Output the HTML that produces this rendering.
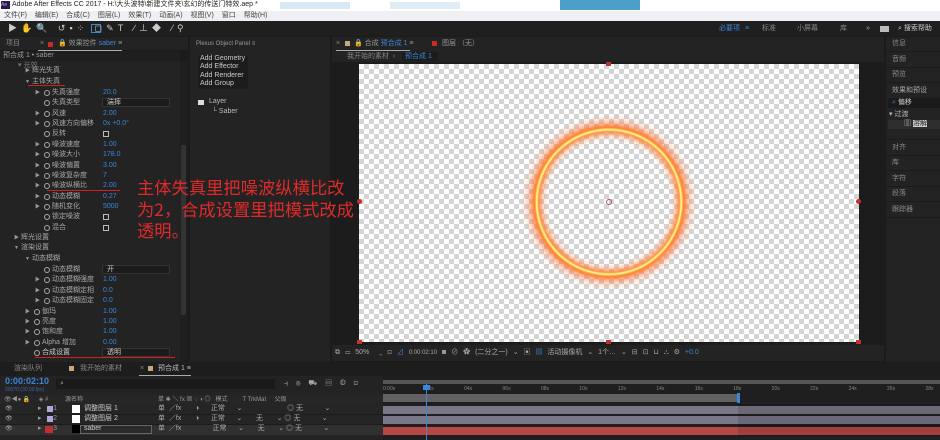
<!DOCTYPE html>
<html><head><meta charset="utf-8"><style>
*{margin:0;padding:0;box-sizing:border-box}
body{width:940px;height:440px;overflow:hidden;background:#1b1b1b;font-family:"Liberation Sans","Noto Sans CJK SC",sans-serif;position:relative;color:#a8a8a8}
div,span,b,i{position:absolute}
.r{left:0;width:180px;height:10px;font-size:7px;line-height:10px;white-space:nowrap}
.r span,.r b,.r i{top:0}
.r b{font-weight:normal;color:#3a86d8}
.a{font-style:normal;font-size:5px;color:#999}
.s{width:6px;height:6px;border:1px solid #aaa;border-radius:50%;top:2px!important}
.cb{width:6px;height:6px;border:1px solid #bbb;top:2px!important}
.dd{height:9px;background:#1c1c1c;border:1px solid #333;top:0!important;color:#ccc;padding-left:4px;line-height:8px}
.t{font-size:7px;line-height:10px;white-space:nowrap}
.rp{left:892px;font-size:7px;color:#8a8a8a}
.rl{left:886px;width:54px;height:1px;background:#1b1b1b}
</style></head><body>
<!-- title + menu -->
<div style="left:0;top:0;width:940px;height:11px;background:#fff"></div>
<div class="t" style="left:12px;top:0;color:#222;line-height:10px">Adobe After Effects CC 2017 - H:\大头波特\新建文件夹\玄幻的传送门特效.aep *</div>
<div style="left:1px;top:1px;width:9px;height:8px;background:#2a1a4a;font-size:5px;color:#c9a0ff;line-height:8px">Ae</div>
<div style="left:280px;top:2px;width:70px;height:7px;background:#d8e8f4"></div>
<div style="left:390px;top:2px;width:70px;height:7px;background:#e0ecf6"></div>
<div style="left:560px;top:0;width:80px;height:10px;background:#4aa0c8"></div>
<div style="left:0;top:11px;width:940px;height:10px;background:#eef0f3"></div>
<div class="t" style="left:4px;top:11px;color:#444;word-spacing:6px">文件(F) 编辑(E) 合成(C) 图层(L) 效果(T) 动画(A) 视图(V) 窗口 帮助(H)</div>
<!-- toolbar -->
<div style="left:0;top:21px;width:940px;height:15px;background:#1f1f1f"></div>
<div class="t" style="left:8px;top:23px;color:#ccc;font-size:9px;letter-spacing:4px">▶✋🔍 ↺▪⁘ ◻✎T ∕⊥◆ ⁄⚲</div>
<div style="left:91px;top:24px;width:10px;height:9px;border:1px solid #3a86d8"></div>
<div class="t" style="left:719px;top:24px;color:#3a86d8">必要项</div>
<div class="t" style="left:745px;top:24px;color:#3a86d8">≡</div>
<div class="t" style="left:762px;top:24px;color:#888">标准</div>
<div class="t" style="left:797px;top:24px;color:#888">小屏幕</div>
<div class="t" style="left:840px;top:24px;color:#888">库</div>
<div class="t" style="left:866px;top:24px;color:#aaa">»</div>
<div style="left:880px;top:26px;width:9px;height:6px;background:#bbb"></div>
<div class="t" style="left:898px;top:24px;color:#ccc">⌕ 搜索帮助</div>

<!-- LEFT panel -->
<div style="left:0;top:37px;width:188px;height:13px;background:#232323"></div>
<div class="t" style="left:6px;top:39px;color:#888">项目</div>
<div class="t" style="left:40px;top:39px;color:#888">×</div>
<div style="left:48px;top:42px;width:5px;height:5px;background:#c92a2a"></div>
<div class="t" style="left:58px;top:39px;color:#999">🔒 效果控件 <span style="position:static;color:#3a86d8">saber</span> ≡</div>
<div style="left:38px;top:50px;width:84px;height:1px;background:#aaa"></div>
<div style="left:0;top:51px;width:180px;height:10px;background:#1f1f1f"></div>
<div class="t" style="left:3px;top:51px;color:#999">预合成 1 • saber</div>
<div style="left:0;top:61px;width:180px;height:301px;background:#232323"></div>
<div style="left:180px;top:61px;width:8px;height:301px;background:#1f1f1f"></div>
<div style="left:181px;top:145px;width:5px;height:170px;background:#333;border-radius:2px"></div>

<div class="r" style="top:61px"><span style="left:18px;color:#777">▾ 光效</span></div>
<div class="r" style="top:66px"><i class="a" style="left:25px">▶</i><span style="left:32px">辉光失真</span></div>
<div class="r" style="top:77px"><i class="a" style="left:25px">▼</i><span style="left:32px">主体失真</span></div>
<div style="left:28px;top:85px;width:37px;height:1px;background:#d02020"></div>
<div class="r" style="top:88px"><i class="a" style="left:35px">▶</i><i class="s" style="left:44px"></i><span style="left:52px">失真强度</span><b style="left:103px">20.0</b></div>
<div class="r" style="top:98px"><i class="s" style="left:44px"></i><span style="left:52px">失真类型</span><span class="dd" style="left:102px;width:68px">湍摔</span></div>
<div class="r" style="top:109px"><i class="a" style="left:35px">▶</i><i class="s" style="left:44px"></i><span style="left:52px">风速</span><b style="left:103px">2.00</b></div>
<div class="r" style="top:119px"><i class="a" style="left:35px">▶</i><i class="s" style="left:44px"></i><span style="left:52px">风速方向偏移</span><b style="left:103px">0x +0.0°</b></div>
<div class="r" style="top:129px"><i class="s" style="left:44px"></i><span style="left:52px">反转</span><i class="cb" style="left:103px"></i></div>
<div class="r" style="top:140px"><i class="a" style="left:35px">▶</i><i class="s" style="left:44px"></i><span style="left:52px">噪波速度</span><b style="left:103px">1.00</b></div>
<div class="r" style="top:150px"><i class="a" style="left:35px">▶</i><i class="s" style="left:44px"></i><span style="left:52px">噪波大小</span><b style="left:103px">178.0</b></div>
<div class="r" style="top:161px"><i class="a" style="left:35px">▶</i><i class="s" style="left:44px"></i><span style="left:52px">噪波偏置</span><b style="left:103px">3.00</b></div>
<div class="r" style="top:171px"><i class="a" style="left:35px">▶</i><i class="s" style="left:44px"></i><span style="left:52px">噪波复杂度</span><b style="left:103px">7</b></div>
<div class="r" style="top:181px"><i class="a" style="left:35px">▶</i><i class="s" style="left:44px"></i><span style="left:52px">噪波纵横比</span><b style="left:103px">2.00</b></div>
<div style="left:47px;top:190px;width:73px;height:1px;background:#d02020"></div>
<div class="r" style="top:192px"><i class="a" style="left:35px">▶</i><i class="s" style="left:44px"></i><span style="left:52px">动态模糊</span><b style="left:103px">0.27</b></div>
<div class="r" style="top:202px"><i class="a" style="left:35px">▶</i><i class="s" style="left:44px"></i><span style="left:52px">随机变化</span><b style="left:103px">5000</b></div>
<div class="r" style="top:212px"><i class="s" style="left:44px"></i><span style="left:52px">锁定噪波</span><i class="cb" style="left:103px"></i></div>
<div class="r" style="top:223px"><i class="s" style="left:44px"></i><span style="left:52px">混合</span><i class="cb" style="left:103px"></i></div>
<div class="r" style="top:233px"><i class="a" style="left:14px">▶</i><span style="left:21px">辉光设置</span></div>
<div class="r" style="top:243px"><i class="a" style="left:14px">▼</i><span style="left:21px">渲染设置</span></div>
<div class="r" style="top:254px"><i class="a" style="left:25px">▼</i><span style="left:32px">动态模糊</span></div>
<div class="r" style="top:265px"><i class="s" style="left:44px"></i><span style="left:52px">动态模糊</span><span class="dd" style="left:102px;width:68px">开</span></div>
<div class="r" style="top:275px"><i class="a" style="left:35px">▶</i><i class="s" style="left:44px"></i><span style="left:52px">动态模糊强度</span><b style="left:103px">1.00</b></div>
<div class="r" style="top:286px"><i class="a" style="left:35px">▶</i><i class="s" style="left:44px"></i><span style="left:52px">动态模糊定相</span><b style="left:103px">0.0</b></div>
<div class="r" style="top:296px"><i class="a" style="left:35px">▶</i><i class="s" style="left:44px"></i><span style="left:52px">动态模糊固定</span><b style="left:103px">0.0</b></div>
<div class="r" style="top:307px"><i class="a" style="left:25px">▶</i><i class="s" style="left:34px"></i><span style="left:42px">伽玛</span><b style="left:103px">1.00</b></div>
<div class="r" style="top:317px"><i class="a" style="left:25px">▶</i><i class="s" style="left:34px"></i><span style="left:42px">亮度</span><b style="left:103px">1.00</b></div>
<div class="r" style="top:327px"><i class="a" style="left:25px">▶</i><i class="s" style="left:34px"></i><span style="left:42px">饱和度</span><b style="left:103px">1.00</b></div>
<div class="r" style="top:338px"><i class="a" style="left:25px">▶</i><i class="s" style="left:34px"></i><span style="left:42px">Alpha 增加</span><b style="left:103px">0.00</b></div>
<div class="r" style="top:348px"><i class="s" style="left:34px"></i><span style="left:42px;color:#ccc">合成设置</span><span class="dd" style="left:102px;width:68px">透明</span></div>
<div style="left:35px;top:357px;width:140px;height:1px;background:#d02020"></div>

<!-- PLEXUS panel -->
<div style="left:190px;top:37px;width:140px;height:325px;background:#232323"></div>
<div class="t" style="left:196px;top:39px;color:#999;font-size:6px">Plexus Object Panel ≡</div>
<div style="left:198px;top:56px;width:50px;height:33px;background:#1c1c1c"></div>
<div class="t" style="left:200px;top:55px;color:#ccc;line-height:8.3px">Add Geometry<br>Add Effector<br>Add Renderer<br>Add Group</div>
<div style="left:198px;top:100px;width:6px;height:5px;background:#ddd"></div>
<div class="t" style="left:209px;top:97px;color:#bbb">Layer</div>
<div class="t" style="left:212px;top:107px;color:#bbb">└ Saber</div>

<!-- COMP panel -->
<div style="left:332px;top:37px;width:552px;height:14px;background:#232323"></div>
<div class="t" style="left:336px;top:39px;color:#888">×</div>
<div style="left:345px;top:41px;width:5px;height:5px;background:#c9a878"></div>
<div class="t" style="left:354px;top:39px;color:#999">🔒 合成 <span style="position:static;color:#3a86d8">预合成 1</span> ≡</div>
<div style="left:336px;top:50px;width:74px;height:1px;background:#aaa"></div>
<div style="left:432px;top:41px;width:5px;height:5px;background:#c92a2a"></div>
<div class="t" style="left:442px;top:39px;color:#999">图层 （无）</div>
<div style="left:332px;top:51px;width:552px;height:11px;background:#232323"></div>
<div class="t" style="left:347px;top:52px;color:#888">我开始的素材 &nbsp;‹</div>
<div style="left:402px;top:52px;width:36px;height:9px;background:#1c1c1c"></div>
<div class="t" style="left:405px;top:52px;color:#3a86d8">预合成 1</div>
<div style="left:332px;top:62px;width:552px;height:283px;background:#1c1c1c"></div>
<div style="left:359px;top:64px;width:500px;height:278px;background:repeating-conic-gradient(#d4d4d4 0 25%,#fff 0 50%) 0 0/10px 10px"></div>
<div style="left:519px;top:112px;width:180px;height:180px;border-radius:50%;background:radial-gradient(circle closest-side,rgba(255,255,255,0) 68%,rgba(255,150,90,.3) 73%,rgba(255,120,50,.7) 77%,#ff9a40 78.5%,#ffe070 79.5%,#fff4b0 80.5%,#ffc050 81.5%,#ff8030 83%,rgba(255,110,50,.5) 87%,rgba(255,140,80,.2) 92%,rgba(255,255,255,0) 98%)"></div>
<div style="left:606px;top:199px;width:6px;height:6px;border:1px solid #b05060;border-radius:50%"></div>
<div style="left:357px;top:199px;width:5px;height:5px;border-radius:50%;background:#c03030"></div>
<div style="left:856px;top:199px;width:5px;height:5px;border-radius:50%;background:#c03030"></div>
<div style="left:606px;top:62px;width:5px;height:4px;background:#c03030"></div>
<div style="left:606px;top:340px;width:5px;height:4px;background:#c03030"></div>
<div style="left:357px;top:340px;width:5px;height:4px;background:#c03030"></div>
<div style="left:856px;top:340px;width:5px;height:4px;background:#c03030"></div>
<div style="left:332px;top:345px;width:552px;height:16px;background:#232323"></div>
<div class="t" style="left:335px;top:348px;color:#aaa;word-spacing:3px">⧉ ▭ 50% &nbsp;⌄ ⊡ <span style="position:static;color:#3a86d8">⊿</span> <span style="position:static;font-size:6px">0:00:02:10</span> ◙ ⊘ ✿ (二分之一) ⌄ ▣ <span style="position:static;color:#3a86d8">▧</span> 活动摄像机 ⌄ 1个… ⌄ ⊟ ⊡ ⊔ ⛬ ⚙ <span style="position:static;color:#3a86d8">+0.0</span></div>

<!-- RIGHT panel -->
<div style="left:886px;top:37px;width:54px;height:325px;background:#232323"></div>
<div class="t rp" style="top:39px">信息</div><div class="rl" style="top:51px"></div>
<div class="t rp" style="top:55px">音频</div><div class="rl" style="top:67px"></div>
<div class="t rp" style="top:70px">预览</div><div class="rl" style="top:82px"></div>
<div class="t rp" style="top:86px;color:#aaa">效果和预设</div>
<div style="left:888px;top:98px;width:52px;height:10px;background:#1a1a1a"></div>
<div class="t" style="left:892px;top:98px;color:#ccc"><span style="position:static;color:#3a86d8">⌕</span> 偏移</div>
<div class="t" style="left:889px;top:110px;color:#bbb">▾ 过渡</div>
<div style="left:888px;top:120px;width:52px;height:9px;background:#2e2e2e"></div>
<div class="t" style="left:904px;top:119px;color:#ccc">▥ <span style="position:static;background:#ccc;color:#222">溶解</span></div>
<div class="rl" style="top:139px"></div>
<div class="t rp" style="top:143px">对齐</div><div class="rl" style="top:155px"></div>
<div class="t rp" style="top:158px">库</div><div class="rl" style="top:170px"></div>
<div class="t rp" style="top:174px">字符</div><div class="rl" style="top:186px"></div>
<div class="t rp" style="top:189px">段落</div><div class="rl" style="top:201px"></div>
<div class="t rp" style="top:205px">跟踪器</div><div class="rl" style="top:217px"></div>

<!-- annotation -->
<div style="left:137px;top:176px;width:240px;white-space:nowrap;font-size:17.3px;line-height:21.5px;color:#e02a2a;font-family:'Noto Sans CJK SC','Liberation Sans',sans-serif">主体失真里把噪波纵横比改<br>为2，合成设置里把模式改成<br>透明。</div>

<!-- TIMELINE -->
<div style="left:0;top:362px;width:940px;height:14px;background:#1d1d1d"></div>
<div class="t" style="left:14px;top:364px;color:#888">渲染队列</div>
<div style="left:69px;top:366px;width:5px;height:5px;background:#c9a878"></div>
<div class="t" style="left:80px;top:364px;color:#888">我开始的素材</div>
<div class="t" style="left:140px;top:364px;color:#888">×</div>
<div style="left:148px;top:366px;width:5px;height:5px;background:#c9a878"></div>
<div class="t" style="left:158px;top:364px;color:#bbb">预合成 1 ≡</div>
<div style="left:139px;top:375px;width:52px;height:1px;background:#aaa"></div>
<div style="left:0;top:376px;width:940px;height:64px;background:#232323"></div>
<div class="t" style="left:5px;top:376px;color:#3a86d8;font-size:9px;font-weight:bold">0:00:02:10</div>
<div class="t" style="left:5px;top:385px;color:#3a6aa8;font-size:5px">00070 (30.00 fps)</div>
<div style="left:56px;top:379px;width:219px;height:10px;background:#1a1a1a"></div>
<div class="t" style="left:60px;top:379px;color:#aaa">⌕</div>
<div class="t" style="left:284px;top:379px;color:#aaa;word-spacing:6px">⥽ ⊛ ⛟ ▤ ◍ ⊡</div>
<div style="left:0;top:395px;width:383px;height:9px;background:#262626"></div>
<div class="t" style="left:4px;top:395px;color:#999;font-size:6px">👁◀● 🔒 &nbsp; &nbsp; ◈ # &nbsp; &nbsp; &nbsp; &nbsp; &nbsp;源名称</div>
<div class="t" style="left:158px;top:395px;color:#999;font-size:6px">单 ✱ ＼ fx ▦ ◌ ◑ ◎ &nbsp; 模式 &nbsp; &nbsp; &nbsp; &nbsp; T TrkMat &nbsp; &nbsp; 父级</div>
<!-- rows -->
<div style="left:0;top:404px;width:383px;height:10px;background:#252525"></div>
<div style="left:0;top:414px;width:383px;height:10px;background:#252525;border-top:1px solid #1b1b1b"></div>
<div style="left:0;top:424px;width:383px;height:11px;background:#303030;border-top:1px solid #1b1b1b"></div>
<div class="t" style="left:5px;top:404px;color:#aaa;font-size:6px">👁</div>
<div class="t" style="left:5px;top:414px;color:#aaa;font-size:6px">👁</div>
<div class="t" style="left:5px;top:424px;color:#aaa;font-size:6px">👁</div>
<div style="left:47px;top:406px;width:6px;height:6px;background:#b0a8d8"></div>
<div style="left:47px;top:416px;width:6px;height:6px;background:#b0a8d8"></div>
<div style="left:45px;top:426px;width:8px;height:7px;background:#c03030"></div>
<div class="t" style="left:38px;top:404px;color:#999">▸ &nbsp; &nbsp; &nbsp;1</div>
<div class="t" style="left:38px;top:414px;color:#999">▸ &nbsp; &nbsp; &nbsp;2</div>
<div class="t" style="left:38px;top:424px;color:#999">▸ &nbsp; &nbsp; &nbsp;3</div>
<div style="left:72px;top:405px;width:8px;height:8px;background:#fff"></div>
<div style="left:72px;top:415px;width:8px;height:8px;background:#fff"></div>
<div style="left:72px;top:425px;width:8px;height:8px;background:#000"></div>
<div class="t" style="left:84px;top:404px;color:#ccc">调整图层 1</div>
<div class="t" style="left:84px;top:414px;color:#ccc">调整图层 2</div>
<div style="left:80px;top:425px;width:72px;height:9px;border:1px solid #666;background:#2a2a2a"></div>
<div class="t" style="left:84px;top:424px;color:#ccc">saber</div>
<div class="t" style="left:158px;top:404px;color:#aaa">单 &nbsp;／fx &nbsp; &nbsp; &nbsp; ◑ &nbsp; &nbsp; &nbsp;正常 &nbsp; &nbsp; &nbsp;⌄ &nbsp; &nbsp; &nbsp; &nbsp; &nbsp; &nbsp; &nbsp; &nbsp; &nbsp; &nbsp; &nbsp; ◎ 无 &nbsp; &nbsp; &nbsp; &nbsp; &nbsp; ⌄</div>
<div class="t" style="left:158px;top:414px;color:#aaa">单 &nbsp;／fx &nbsp; &nbsp; &nbsp; ◑ &nbsp; &nbsp; &nbsp;正常 &nbsp; &nbsp; &nbsp;⌄ &nbsp; &nbsp; &nbsp; 无 &nbsp; &nbsp; &nbsp; ⌄ ◎ 无 &nbsp; &nbsp; &nbsp; &nbsp; &nbsp; ⌄</div>
<div class="t" style="left:158px;top:424px;color:#aaa">单 &nbsp;／fx &nbsp; &nbsp; &nbsp; &nbsp; &nbsp; &nbsp; &nbsp; &nbsp;正常 &nbsp; &nbsp; &nbsp;⌄ &nbsp; &nbsp; &nbsp; 无 &nbsp; &nbsp; &nbsp; ⌄ ◎ 无 &nbsp; &nbsp; &nbsp; &nbsp; &nbsp; ⌄</div>
<!-- timeline right -->
<div style="left:383px;top:376px;width:557px;height:64px;background:#1f1f1f"></div>
<div style="left:383px;top:380px;width:557px;height:4px;background:#555"></div>
<div class="t" style="left:383px;top:384px;color:#888;font-size:5px;word-spacing:29px">0:00s 02s 04s 06s 08s 10s 12s 14s 16s 18s 20s 22s 24s 26s 28s 30s</div>
<div style="left:383px;top:394px;width:355px;height:8px;background:#626262"></div>
<div style="left:737px;top:393px;width:3px;height:10px;background:#3a86d8"></div>
<div style="left:383px;top:406px;width:557px;height:8px;background:#7a7888"></div>
<div style="left:383px;top:416px;width:557px;height:8px;background:#7a7888"></div>
<div style="left:383px;top:427px;width:557px;height:8px;background:#b84848"></div>
<div style="left:738px;top:404px;width:202px;height:32px;background:rgba(0,0,0,.12)"></div>
<div style="left:426px;top:384px;width:1px;height:56px;background:#3a86d8"></div>
<div style="left:423px;top:385px;width:7px;height:5px;background:#3a86d8"></div>
</body></html>
